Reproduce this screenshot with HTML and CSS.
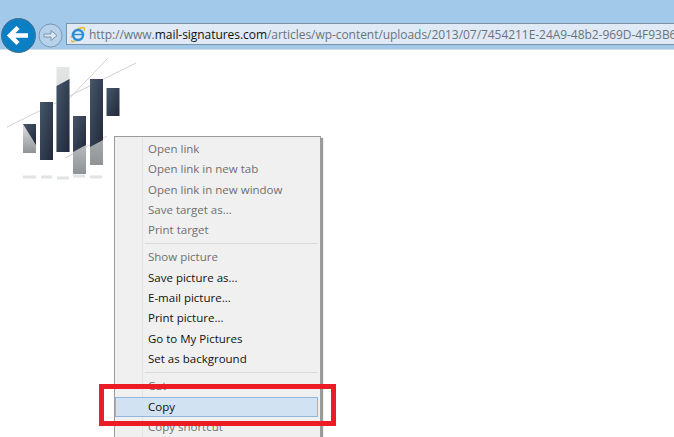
FILE: index.html
```html
<!DOCTYPE html>
<html lang="en">
<head>
<meta charset="utf-8">
<title>Copy image</title>
<link rel="stylesheet" href="styles.css">
</head>
<body>
<header class="chrome">
  <svg class="back" width="35" height="35" viewBox="0 0 35 35"><circle cx="17.5" cy="17.5" r="17" fill="#0a7fc4" stroke="#4c6f8d"/><path d="M8 17.5H27M17 9.5L9 17.5L17 25.5" fill="none" stroke="#fff" stroke-width="4.5"/></svg>
  <svg class="forward" width="25" height="25" viewBox="0 0 25 25"><circle cx="12.5" cy="12.5" r="11.5" fill="#b5d2ea" stroke="#7a96b0"/><path d="M6 11H13V7.5L19 12.5L13 17.5V14H6Z" fill="#dbe9f4" stroke="#7d93a8"/></svg>
  <div class="address">
    <svg class="ie" width="17" height="17" viewBox="0 0 17 17"><path d="M2 12C3 6 8 2 14 1.500C15.500 1.500 16 3 15 5" fill="none" stroke="#e8b830" stroke-width="1.500"/><path d="M3 14C2 16 4 16.500 7 14.500" fill="none" stroke="#e8b830" stroke-width="1.500"/><circle cx="9" cy="9" r="5" fill="none" stroke="#2b8fd8" stroke-width="2.500"/><path d="M5 8.500H14" stroke="#2b8fd8" stroke-width="1.500"/></svg>
    <span class="url">http://www.<b class="domain">mail-signatures.com</b>/articles/wp-content/uploads/2013/07/7454211E-24A9-48b2-969D-4F93B679618F.jpg</span>
  </div>
</header>
<main class="page">
  <svg class="logo" width="150" height="140" viewBox="0 0 150 140">
    <defs>
      <linearGradient id="fadeUp" x1="0" y1="0" x2="0" y2="1"><stop offset="0" stop-color="#e4e6e6"/><stop offset="1" stop-color="#c4c8c8"/></linearGradient>
      <linearGradient id="fadeDown" x1="0" y1="0" x2="0" y2="1"><stop offset="0" stop-color="#dfe1e2"/><stop offset="1" stop-color="#8f9395"/></linearGradient>
      <linearGradient id="dark" x1="0" y1="0" x2="1" y2="1"><stop offset="0" stop-color="#47566a"/><stop offset="1" stop-color="#20293a"/></linearGradient>
    </defs>
    <path d="M7 77L136 13M65 53L108 8M65 108L107 86" stroke="#cfd2d4" fill="none"/>
    <rect x="23" y="74" width="13" height="29" fill="url(#fadeDown)"/>
    <path d="M23 74H36V95Z" fill="url(#dark)"/>
    <rect x="40" y="102" width="13" height="8" fill="#30394a"/>
    <rect x="40" y="52" width="13" height="58" fill="url(#dark)"/>
    <rect x="56.500" y="17" width="13" height="85" fill="url(#fadeUp)"/>
    <path d="M56.500 36L69.500 29V102H56.500Z" fill="url(#dark)"/>
    <rect x="73" y="66" width="13" height="58" fill="url(#fadeDown)"/>
    <path d="M73 66H86V95L73 102Z" fill="url(#dark)"/>
    <rect x="90" y="29" width="13" height="86" fill="url(#fadeDown)"/>
    <path d="M90 29H103V90L90 97Z" fill="url(#dark)"/>
    <rect x="106.500" y="38" width="13" height="28" fill="url(#dark)"/>
    <path d="M23 127H36M41 127H52M57 128H69M73 126H85M90 127H102" stroke="#e2e3e4" stroke-width="3"/>
  </svg>
  <nav class="menu">
    <ul class="group">
      <li class="item off">Open link</li>
      <li class="item off">Open link in new tab</li>
      <li class="item off">Open link in new window</li>
      <li class="item off">Save target as...</li>
      <li class="item off">Print target</li>
    </ul>
    <ul class="group">
      <li class="item off">Show picture</li>
      <li class="item">Save picture as...</li>
      <li class="item">E-mail picture...</li>
      <li class="item">Print picture...</li>
      <li class="item">Go to My Pictures</li>
      <li class="item">Set as background</li>
    </ul>
    <ul class="group">
      <li class="item off">Cut</li>
      <li class="item active">Copy</li>
      <li class="item off">Copy shortcut</li>
    </ul>
  </nav>
  <div class="callout"></div>
</main>
</body>
</html>
```
FILE: styles.css
```css
html, body {
  margin: 0;
  height: 100%;
  overflow: hidden;
  background: #fff;
}
body {
  width: 674px;
  height: 437px;
  position: relative;
  font-family: "Open Sans", "Noto Sans", sans-serif;
}
.chrome {
  height: 50px;
  box-sizing: border-box;
  background: #a2c8ea;
  border-bottom: 1px solid #d8dee4;
  display: flex;
  align-items: flex-end;
  padding: 0 0 0 1px;
  position: relative;
}
.back {
  position: absolute;
  left: 1px;
  top: 18px;
}
.forward {
  position: absolute;
  left: 38px;
  top: 23px;
}
.address {
  margin: 0 0 4px 65px;
  width: 609px;
  height: 22px;
  box-sizing: border-box;
  background: #dfeaf6;
  border: 1px solid #7d93a6;
  border-right: 0;
  display: flex;
  align-items: center;
  gap: 3px;
  padding-left: 2px;
}
.ie { flex: none; }
.url {
  font-size: 12px;
  letter-spacing: -0.05px;
  color: #6b737a;
  white-space: nowrap;
}
.domain { font-weight: 400; color: #111; }
.page {
  height: 387px;
  position: relative;
  overflow: hidden;
}
.logo {
  position: absolute;
  left: 0;
  top: 0;
}
.menu {
  position: absolute;
  left: 114px;
  top: 86px;
  width: 207px;
  height: 320px;
  box-sizing: border-box;
  background: #f0f0f0;
  border: 1px solid #9b9b9b;
  box-shadow: 2px 2px 1px #9a9a9a;
  padding: 2px;
}
.menu::before {
  content: "";
  position: absolute;
  left: 27px;
  top: 0;
  bottom: 0;
  width: 1px;
  background: #e2e3e3;
}
.group {
  list-style: none;
  margin: 0;
  padding: 0 0 3px;
  border-bottom: 1px solid #d8d8d8;
  margin-left: 28px;
  position: relative;
}
.group + .group { padding-top: 3px; }
.group:last-child { border: 0; }
.item {
  height: 20.300px;
  line-height: 20px;
  font-size: 11.500px;
  padding-left: 3px;
  color: #111;
  white-space: nowrap;
}
.off { color: #6f6f6f; }
.active {
  margin-left: -30px;
  padding-left: 32px;
  margin-right: 0;
  height: 20px;
  box-sizing: border-box;
  line-height: 18px;
  background: #d1e2f2;
  border: 1px solid #8fb6dc;
  color: #111;
}
.callout {
  position: absolute;
  left: 99px;
  top: 334px;
  width: 237px;
  height: 42px;
  box-sizing: border-box;
  border: 5px solid #ed1c24;
}
```
